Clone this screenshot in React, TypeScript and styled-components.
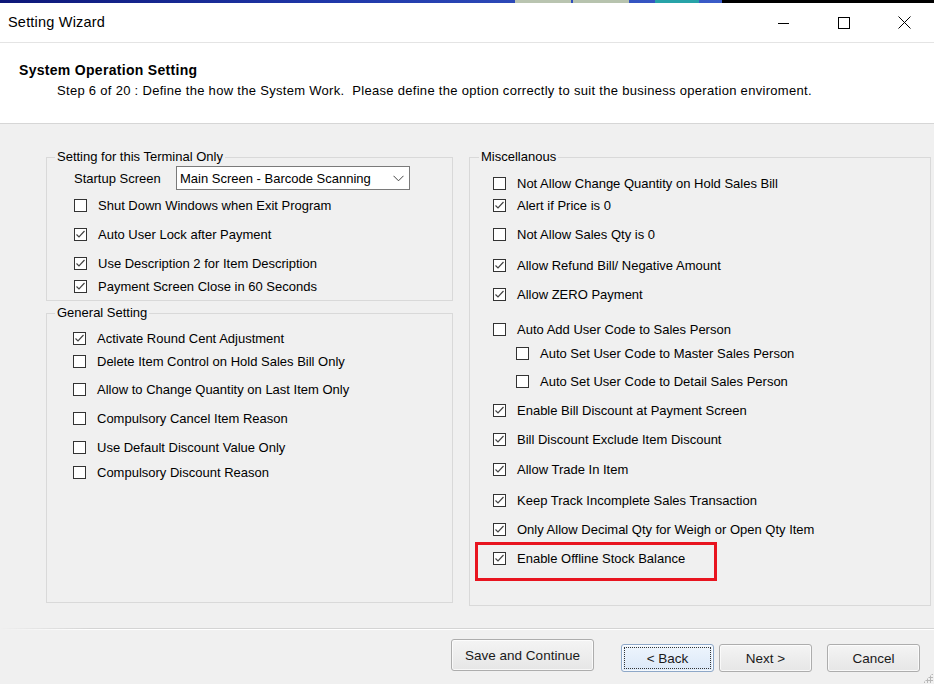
import React from "react";
import styled, { createGlobalStyle } from "styled-components";

const Global = createGlobalStyle`
  html, body { margin: 0; padding: 0; background: #f0f0f0; }
  body { font-family: "Liberation Sans", Arial, sans-serif; color: #000; }
  * { box-sizing: border-box; }
`;

const Window = styled.div`
  width: 934px;
  height: 684px;
  display: flex;
  flex-direction: column;
  background: #f0f0f0;
  overflow: hidden;
  position: relative;
`;

const TopStrip = styled.div`
  height: 3px;
  display: flex;
  background: #000;
`;
const StripBlue = styled.div`
  width: 722px;
  height: 3px;
  background: linear-gradient(90deg, #0d1778 0%, #1f37a8 45%, #3a5cc8 100%);
  display: flex;
  padding-left: 515px;
`;
const StripTile = styled.span<{ $w: number; $c: string; $ml?: number }>`
  width: ${(p) => p.$w}px;
  height: 3px;
  margin-left: ${(p) => p.$ml ?? 0}px;
  background: ${(p) => p.$c};
`;

const TitleBar = styled.div`
  height: 39px;
  background: #fff;
  display: flex;
  align-items: center;
  justify-content: space-between;
`;
const TitleText = styled.div`
  font-size: 14.5px;
  letter-spacing: 0.2px;
  padding-left: 8px;
  margin-top: -1px;
`;
const Controls = styled.div`
  display: flex;
  height: 39px;
`;
const CtrlBtn = styled.div`
  width: 60px;
  height: 39px;
  display: flex;
  align-items: center;
  justify-content: center;
`;

const Header = styled.div`
  height: 82px;
  background: #fff;
  border-top: 1px solid #e4e4e4;
  border-bottom: 1px solid #d6d6d6;
  padding-top: 19px;
`;
const HeaderTitle = styled.div`
  font-weight: bold;
  font-size: 14px;
  letter-spacing: 0.3px;
  line-height: 16px;
  padding-left: 19px;
`;
const HeaderSub = styled.div`
  font-size: 13px;
  letter-spacing: 0.3px;
  line-height: 16px;
  padding-left: 57px;
  margin-top: 5px;
`;

const Body = styled.div`
  flex: 1;
  display: flex;
  flex-direction: column;
  padding-top: 25px;
`;
const Columns = styled.div`
  flex: 1;
  display: flex;
  gap: 16px;
  padding-left: 46px;
  padding-right: 3px;
`;
const Column = styled.div<{ $w: number; $pb?: number }>`
  width: ${(p) => p.$w}px;
  display: flex;
  flex-direction: column;
  padding-bottom: ${(p) => p.$pb ?? 0}px;
`;

const Group = styled.fieldset<{ $grow?: boolean; $mt?: number }>`
  margin: ${(p) => p.$mt ?? 0}px 0 0 0;
  padding: 0;
  border: 1px solid #d9d9d9;
  flex: ${(p) => (p.$grow ? 1 : "none")};
  min-width: 0;
`;
const Legend = styled.legend<{ $ml: number }>`
  font-size: 13px;
  line-height: 16px;
  padding: 0 2px;
  margin-left: ${(p) => p.$ml}px;
`;
const GroupInner = styled.div<{ $pl: number; $pb: number }>`
  padding-left: ${(p) => p.$pl}px;
  padding-bottom: ${(p) => p.$pb}px;
  display: flex;
  flex-direction: column;
`;

const Row = styled.div<{ $mt: number; $indent?: number; $h?: number }>`
  display: flex;
  align-items: center;
  gap: 11px;
  height: ${(p) => p.$h ?? 20}px;
  margin-top: ${(p) => p.$mt}px;
  padding-left: ${(p) => p.$indent ?? 0}px;
  font-size: 13px;
  position: relative;
  white-space: nowrap;
`;

const Box = styled.span`
  width: 13px;
  height: 13px;
  flex: none;
  border: 1px solid #333;
  background: #fff;
  display: flex;
  align-items: center;
  justify-content: center;
`;

const Highlight = styled.span`
  position: absolute;
  left: -18px;
  top: -6px;
  width: 242px;
  height: 39px;
  border: 3px solid #e8141f;
  pointer-events: none;
`;

const StartLabel = styled.span`
  width: 102px;
  flex: none;
`;
const Select = styled.div`
  width: 234px;
  height: 24px;
  background: #fff;
  border: 1px solid #7a7a7a;
  display: flex;
  align-items: center;
  justify-content: space-between;
  padding: 0 5px 0 3px;
  font-size: 13px;
  margin-left: -11px;
`;

const Footer = styled.div`
  display: flex;
  flex-direction: column;
`;
const Separator = styled.div`
  margin-top: 22px;
  height: 2px;
  border-top: 1px solid #d4d4d4;
  border-bottom: 1px solid #fff;
  background: transparent;
  mask-image: linear-gradient(90deg, transparent 0px, #000 90px);
  -webkit-mask-image: linear-gradient(90deg, transparent 0px, #000 90px);
`;
const ButtonRow = styled.div`
  height: 54px;
  display: flex;
  align-items: flex-start;
  padding-left: 451px;
`;
const Button = styled.div<{ $w: number; $h: number; $mt: number; $ml: number; $focus?: boolean }>`
  width: ${(p) => p.$w}px;
  height: ${(p) => p.$h}px;
  margin-top: ${(p) => p.$mt}px;
  margin-left: ${(p) => p.$ml}px;
  border: 1px solid ${(p) => (p.$focus ? "#8ea8c8" : "#adadad")};
  border-radius: 3px;
  background: ${(p) =>
    p.$focus
      ? "linear-gradient(180deg, #eef5fd 0%, #dbe8f8 100%)"
      : "linear-gradient(180deg, #f4f4f4 0%, #e6e6e6 100%)"};
  box-shadow: inset 0 0 0 1px rgba(255, 255, 255, 0.7);
  display: flex;
  align-items: center;
  justify-content: center;
  font-size: 13.5px;
  color: #1a1a1a;
  padding: 2px;
`;
const FocusRect = styled.span`
  flex: 1;
  align-self: stretch;
  display: flex;
  align-items: center;
  justify-content: center;
  border: 1px dotted #333;
`;

const Grip = styled.div`
  position: absolute;
  right: 1px;
  bottom: 1px;
  width: 10px;
  height: 10px;
  background-image: radial-gradient(circle, #b8b8b8 1px, transparent 1.2px);
  background-size: 3px 3px;
  clip-path: polygon(100% 0, 100% 100%, 0 100%);
`;

type Item = { label: string; checked: boolean; mt: number; indent?: number; highlight?: boolean };

const group1: Item[] = [
  { label: "Shut Down Windows when Exit Program", checked: false, mt: 5 },
  { label: "Auto User Lock after Payment", checked: true, mt: 9 },
  { label: "Use Description 2 for Item Description", checked: true, mt: 9 },
  { label: "Payment Screen Close in 60 Seconds", checked: true, mt: 3 },
];

const group2: Item[] = [
  { label: "Activate Round Cent Adjustment", checked: true, mt: 7 },
  { label: "Delete Item Control on Hold Sales Bill Only", checked: false, mt: 3 },
  { label: "Allow to Change Quantity on Last Item Only", checked: false, mt: 8 },
  { label: "Compulsory Cancel Item Reason", checked: false, mt: 9 },
  { label: "Use Default Discount Value Only", checked: false, mt: 9 },
  { label: "Compulsory Discount Reason", checked: false, mt: 5 },
];

const misc: Item[] = [
  { label: "Not Allow Change Quantity on Hold Sales Bill", checked: false, mt: 8 },
  { label: "Alert if Price is 0", checked: true, mt: 2 },
  { label: "Not Allow Sales Qty is 0", checked: false, mt: 9 },
  { label: "Allow Refund Bill/ Negative Amount", checked: true, mt: 11 },
  { label: "Allow ZERO Payment", checked: true, mt: 9 },
  { label: "Auto Add User Code to Sales Person", checked: false, mt: 15 },
  { label: "Auto Set User Code to Master Sales Person", checked: false, mt: 4, indent: 23 },
  { label: "Auto Set User Code to Detail Sales Person", checked: false, mt: 8, indent: 23 },
  { label: "Enable Bill Discount at Payment Screen", checked: true, mt: 9 },
  { label: "Bill Discount Exclude Item Discount", checked: true, mt: 9 },
  { label: "Allow Trade In Item", checked: true, mt: 10 },
  { label: "Keep Track Incomplete Sales Transaction", checked: true, mt: 11 },
  { label: "Only Allow Decimal Qty for Weigh or Open Qty Item", checked: true, mt: 9 },
  { label: "Enable Offline Stock Balance", checked: true, mt: 9, highlight: true },
];

function Check({ on }: { on: boolean }) {
  return (
    <Box>
      {on && (
        <svg width="11" height="11" viewBox="0 0 11 11">
          <polyline points="1.5,5.5 4,8 9.5,2" fill="none" stroke="#444" strokeWidth="1.2" />
        </svg>
      )}
    </Box>
  );
}

function CheckRow({ item }: { item: Item }) {
  return (
    <Row $mt={item.mt} $indent={item.indent}>
      <Check on={item.checked} />
      <span>{item.label}</span>
      {item.highlight && <Highlight />}
    </Row>
  );
}

export default function App() {
  return (
    <Window>
      <Global />
      <TopStrip>
        <StripBlue>
          <StripTile $w={56} $c="#b9c4b0" />
          <StripTile $w={56} $c="#b7c3ae" $ml={2} />
          <StripTile $w={44} $c="#27a3a8" $ml={26} />
        </StripBlue>
      </TopStrip>
      <TitleBar>
        <TitleText>Setting Wizard</TitleText>
        <Controls>
          <CtrlBtn>
            <svg width="12" height="12" viewBox="0 0 12 12">
              <line x1="0" y1="6.5" x2="11" y2="6.5" stroke="#000" strokeWidth="1" />
            </svg>
          </CtrlBtn>
          <CtrlBtn>
            <svg width="12" height="12" viewBox="0 0 12 12">
              <rect x="0.5" y="0.5" width="11" height="11" fill="none" stroke="#000" strokeWidth="1" />
            </svg>
          </CtrlBtn>
          <CtrlBtn>
            <svg width="13" height="13" viewBox="0 0 13 13">
              <line x1="0.5" y1="0.5" x2="12.5" y2="12.5" stroke="#000" strokeWidth="1" />
              <line x1="12.5" y1="0.5" x2="0.5" y2="12.5" stroke="#000" strokeWidth="1" />
            </svg>
          </CtrlBtn>
        </Controls>
      </TitleBar>
      <Header>
        <HeaderTitle>System Operation Setting</HeaderTitle>
        <HeaderSub>
          Step 6 of 20 : Define the how the System Work.&nbsp; Please define the option correctly to suit the
          business operation enviroment.
        </HeaderSub>
      </Header>
      <Body>
        <Columns>
          <Column $w={407} $pb={3}>
            <Group>
              <Legend $ml={8}>Setting for this Terminal Only</Legend>
              <GroupInner $pl={27} $pb={4}>
                <Row $mt={1} $h={24}>
                  <StartLabel>Startup Screen</StartLabel>
                  <Select>
                    <span>Main Screen - Barcode Scanning</span>
                    <svg width="11" height="7" viewBox="0 0 11 7">
                      <polyline points="0.5,0.8 5.5,5.8 10.5,0.8" fill="none" stroke="#444" strokeWidth="1" />
                    </svg>
                  </Select>
                </Row>
                {group1.map((it) => (
                  <CheckRow key={it.label} item={it} />
                ))}
              </GroupInner>
            </Group>
            <Group $grow $mt={4}>
              <Legend $ml={8}>General Setting</Legend>
              <GroupInner $pl={26} $pb={0}>
                {group2.map((it) => (
                  <CheckRow key={it.label} item={it} />
                ))}
              </GroupInner>
            </Group>
          </Column>
          <Column $w={462}>
            <Group $grow>
              <Legend $ml={9}>Miscellanous</Legend>
              <GroupInner $pl={23} $pb={0}>
                {misc.map((it) => (
                  <CheckRow key={it.label} item={it} />
                ))}
              </GroupInner>
            </Group>
          </Column>
        </Columns>
        <Footer>
          <Separator />
          <ButtonRow>
            <Button $w={143} $h={32} $mt={9} $ml={0}>Save and Continue</Button>
            <Button $w={93} $h={28} $mt={14} $ml={27} $focus>
              <FocusRect>&lt; Back</FocusRect>
            </Button>
            <Button $w={93} $h={28} $mt={14} $ml={5}>Next &gt;</Button>
            <Button $w={93} $h={28} $mt={14} $ml={15}>Cancel</Button>
          </ButtonRow>
        </Footer>
      </Body>
      <Grip />
    </Window>
  );
}
